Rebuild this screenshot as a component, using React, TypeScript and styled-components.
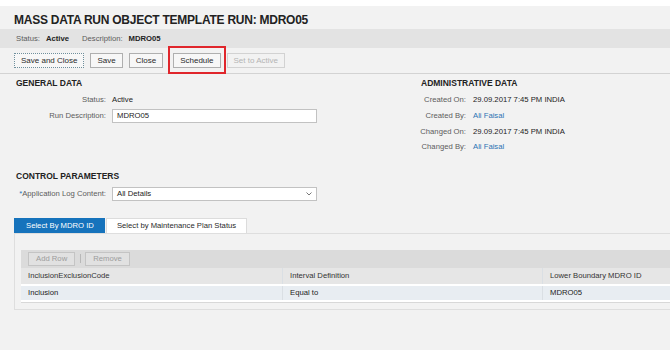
import React from "react";
import styled, {createGlobalStyle} from "styled-components";

const GlobalStyle = createGlobalStyle`
    body {
        margin: 0;
        background: #ffffff;
        overflow: hidden;
    }
`;

const Page = styled.div`
    margin-top: 6px;
    height: 344px;
    background: #f2f2f2;
    overflow: hidden;
    font-family: "Liberation Sans", Arial, sans-serif;
    font-size: 7.7px;
    color: #222;
`;

const Title = styled.h1`
    margin: 0;
    box-sizing: border-box;
    height: 23px;
    padding: 5px 14px 0;
    line-height: 18px;
    font-size: 12px;
    letter-spacing: -0.25px;
    font-weight: bold;
    color: #222;
    white-space: nowrap;
`;

const StatusBar = styled.div`
    height: 19px;
    background: #e3e3e3;
    padding-left: 16px;
    display: flex;
    align-items: center;
    white-space: nowrap;
`;

const BarLabel = styled.span`
    color: #5c5c5c;
    margin-right: 6px;
`;

const BarValue = styled.span`
    font-weight: bold;
    color: #222;
    margin-right: 13px;
`;

const Toolbar = styled.div`
    box-sizing: border-box;
    height: 26px;
    border-bottom: 1px solid #d3d3d3;
    padding-left: 14px;
    display: flex;
    align-items: center;
    gap: 6px;
`;

const Button = styled.button<{ $focused?: boolean; $disabled?: boolean }>`
    box-sizing: border-box;
    height: 15px;
    padding: 0 6px;
    margin: 0;
    font-family: inherit;
    font-size: 8px;
    line-height: 13px;
    background: ${p => p.$disabled ? "#f2f2f2" : "#f7f7f7"};
    color: ${p => p.$disabled ? "#b4b4b4" : "#2a2a2a"};
    border-width: 1px;
    border-style: ${p => p.$focused ? "dotted" : "solid"};
    border-color: ${p => p.$disabled ? "#d2d2d2" : p.$focused ? "#6f8f9c" : "#afafaf"};
    white-space: nowrap;
`;

const Highlight = styled.span`
    position: relative;
    display: inline-flex;
    margin-left: 4px;

    &::after {
        content: "";
        position: absolute;
        top: -7px;
        bottom: -6px;
        left: -5px;
        right: -5px;
        border: 2px solid #e0262c;
        pointer-events: none;
    }
`;

const Content = styled.div`
    padding: 0 14px;
`;

const TwoCol = styled.div`
    display: grid;
    grid-template-columns: 405px 1fr;
    margin-top: 3px;
`;

const SectionTitle = styled.h2<{ $gap: number }>`
    margin: 0 0 ${p => p.$gap}px;
    padding-left: 2px;
    font-size: 8.5px;
    line-height: 12px;
    font-weight: bold;
    color: #222;
    white-space: nowrap;
`;

const FormGrid = styled.div<{ $label: number; $gap: number }>`
    display: grid;
    grid-template-columns: ${p => p.$label}px 1fr;
    column-gap: ${p => p.$gap}px;
    grid-auto-rows: 15.6px;
    align-items: center;
    white-space: nowrap;
`;

const Label = styled.span`
    text-align: right;
    color: #5c5c5c;
`;

const Star = styled.span`
    color: #2a76c0;
`;

const Value = styled.span`
    color: #222;
`;

const Link = styled.span`
    color: #2d72b2;
`;

const Field = styled.div`
    box-sizing: border-box;
    width: 205px;
    height: 14px;
    border: 1px solid #c2c2c2;
    background: #fff;
    padding: 0 4px;
    display: flex;
    align-items: center;
    justify-content: space-between;
    color: #222;
`;

const Control = styled.div`
    margin-top: 15.4px;
`;

const Tabs = styled.div`
    display: flex;
    gap: 1px;
    margin-top: 16.2px;
`;

const Tab = styled.div<{ $active?: boolean }>`
    box-sizing: border-box;
    height: 15px;
    padding: 0 10px 0 ${p => p.$active ? 11 : 10}px;
    display: flex;
    align-items: center;
    white-space: nowrap;
    background: ${p => p.$active ? "#1673bc" : "#ffffff"};
    color: ${p => p.$active ? "#ffffff" : "#2a2a2a"};
    border: 1px solid ${p => p.$active ? "#1673bc" : "#dcdcdc"};
    border-bottom: none;
`;

const Panel = styled.div`
    border: 1px solid #dedede;
    margin-right: -200px;
    padding: 16px 0 6px 6px;
`;

const TableBar = styled.div`
    height: 18px;
    background: #dbdbdb;
    padding-left: 7px;
    display: flex;
    align-items: center;
`;

const SmallButton = styled.span`
    box-sizing: border-box;
    height: 14px;
    padding: 0 7px;
    border: 1px solid #c4c4c4;
    background: #e1e1e1;
    color: #9c9c9c;
    display: inline-flex;
    align-items: center;
    white-space: nowrap;
`;

const Divider = styled.span`
    width: 1px;
    height: 9px;
    background: #b8b8b8;
    margin: 0 4.5px;
`;

const Row = styled.div<{ $head?: boolean }>`
    display: grid;
    grid-template-columns: 261px 260px 1fr;
    height: ${p => p.$head ? 16 : 14}px;
    background: ${p => p.$head ? "#e6e6e6" : "#e8edf2"};
    border-top: ${p => p.$head ? "none" : "2px solid #fff"};
    color: ${p => p.$head ? "#333" : "#222"};
`;

const Cell = styled.div<{ $head?: boolean }>`
    display: flex;
    align-items: center;
    padding-left: 7px;
    white-space: nowrap;

    & + & {
        border-left: 1px solid ${p => p.$head ? "#d2d2d2" : "#dadfe4"};
    }
`;

const TableEnd = styled.div`
    height: 2px;
    background: #fff;
    border-bottom: 1px solid #d8d8d8;
`;

const Chevron = () => (
    <svg width="6" height="4" viewBox="0 0 6 4">
        <path d="M0.5 0.5 L3 3 L5.5 0.5" fill="none" stroke="#777" strokeWidth="1"/>
    </svg>
);

const adminRows = [
    {label: "Created On:", value: "29.09.2017 7:45 PM INDIA"},
    {label: "Created By:", value: "Ali Faisal", link: true},
    {label: "Changed On:", value: "29.09.2017 7:45 PM INDIA"},
    {label: "Changed By:", value: "Ali Faisal", link: true},
];

export default function App() {
    return (
        <Page>
            <GlobalStyle/>
            <Title>MASS DATA RUN OBJECT TEMPLATE RUN: MDRO05</Title>
            <StatusBar>
                <BarLabel>Status:</BarLabel>
                <BarValue>Active</BarValue>
                <BarLabel>Description:</BarLabel>
                <BarValue>MDRO05</BarValue>
            </StatusBar>
            <Toolbar>
                <Button $focused>Save and Close</Button>
                <Button>Save</Button>
                <Button>Close</Button>
                <Highlight>
                    <Button>Schedule</Button>
                </Highlight>
                <Button $disabled>Set to Active</Button>
            </Toolbar>

            <Content>
                <TwoCol>
                    <div>
                        <SectionTitle $gap={3.2}>GENERAL DATA</SectionTitle>
                        <FormGrid $label={92} $gap={6}>
                            <Label>Status:</Label>
                            <Value>Active</Value>
                            <Label>Run Description:</Label>
                            <Field>MDRO05</Field>
                        </FormGrid>
                    </div>
                    <div>
                        <SectionTitle $gap={3.2}>ADMINISTRATIVE DATA</SectionTitle>
                        <FormGrid $label={47} $gap={7}>
                            {adminRows.map(r => (
                                <React.Fragment key={r.label}>
                                    <Label>{r.label}</Label>
                                    {r.link ? <Link>{r.value}</Link> : <Value>{r.value}</Value>}
                                </React.Fragment>
                            ))}
                        </FormGrid>
                    </div>
                </TwoCol>

                <Control>
                    <SectionTitle $gap={4.2}>CONTROL PARAMETERS</SectionTitle>
                    <FormGrid $label={92} $gap={6}>
                        <Label><Star>*</Star>Application Log Content:</Label>
                        <Field>
                            <span>All Details</span>
                            <Chevron/>
                        </Field>
                    </FormGrid>
                </Control>

                <Tabs>
                    <Tab $active>Select By MDRO ID</Tab>
                    <Tab>Select by Maintenance Plan Status</Tab>
                </Tabs>
                <Panel>
                    <TableBar>
                        <SmallButton>Add Row</SmallButton>
                        <Divider/>
                        <SmallButton>Remove</SmallButton>
                    </TableBar>
                    <Row $head>
                        <Cell $head>InclusionExclusionCode</Cell>
                        <Cell $head>Interval Definition</Cell>
                        <Cell $head>Lower Boundary MDRO ID</Cell>
                    </Row>
                    <Row>
                        <Cell>Inclusion</Cell>
                        <Cell>Equal to</Cell>
                        <Cell>MDRO05</Cell>
                    </Row>
                    <TableEnd/>
                </Panel>
            </Content>
        </Page>
    );
}
